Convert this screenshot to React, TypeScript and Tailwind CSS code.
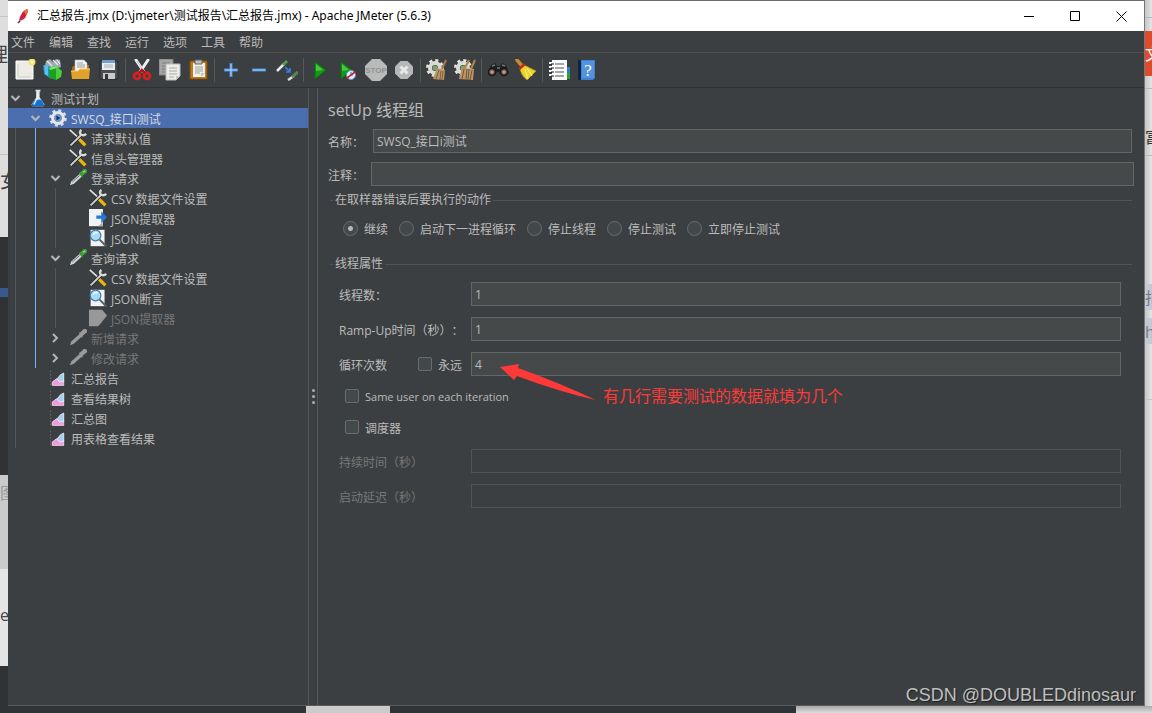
import React from "react";

const Svg = ({ size = 22, children }: { size?: number; children: React.ReactNode }) => (
    <svg width={size} height={size} viewBox="0 0 22 22" fill="none" aria-hidden="true" className="shrink-0">
        {children}
    </svg>
);

/* toolbar icons */

const NewIcon = () => (
    <Svg>
        <path d="M2 2h17v18H2z" fill="#ecebe6" stroke="#fff" />
        <path d="M4 5v12M4 18h13" stroke="#cfcfca" />
        <circle cx="18" cy="3" r="3.5" fill="#f3e36b" />
        <circle cx="18" cy="3" r="1.5" fill="#fffbd0" />
    </Svg>
);

const TemplatesIcon = () => (
    <Svg>
        <path d="M3 7l1-5 4-2 3 3 3-3 4 1 1 7-9 3z" fill="#9fa9b0" />
        <path d="M5 2l5 5M11 1l5 5M15 1l3 4" stroke="#e6ebee" strokeWidth="1.2" />
        <path d="M1 6l8 2v12l-7-5z" fill="#1f8fd0" />
        <path d="M2 6l4 1v10l-3-2z" fill="#57c0f0" />
        <path d="M7 9l7-2v14l-7-2z" fill="#1e9e22" />
        <path d="M14 7l6 5-1 6-5 3z" fill="#48d03a" />
        <path d="M7 9l7-2 1 2-7 2z" fill="#7be86a" />
    </Svg>
);

const OpenIcon = () => (
    <Svg>
        <path d="M2 8l4-2h13v13H2z" fill="#a86f12" />
        <path d="M5 1h9l3 3v9H5z" fill="#f4f4f4" stroke="#bbb" strokeWidth=".6" />
        <path d="M7 4h6M7 6h8M7 8h8" stroke="#999" />
        <path d="M1 12h7l2-2h10l-1 10H2z" fill="#e0a22d" />
        <path d="M1 12h7l2-2h10" stroke="#f7d06f" />
    </Svg>
);

const SaveIcon = () => (
    <Svg>
        <path d="M2 2h17l1 1v17H2z" fill="#4b4d50" stroke="#26282a" />
        <path d="M4 1h13v10H4z" fill="#e9eef3" />
        <path d="M4 1h13v3H4z" fill="#6f9ed0" />
        <path d="M6 6h9M6 8h9" stroke="#a9b0b6" />
        <path d="M5 14h12v6H5z" fill="#c7cacc" />
        <path d="M7 15h3v5H7z" fill="#333" />
    </Svg>
);

const CutIcon = () => (
    <Svg>
        <path d="M5 1l8 12M17 1L9 13" stroke="#eef0f1" strokeWidth="3" strokeLinecap="round" />
        <path d="M6 2l7 11" stroke="#aaa" strokeWidth=".7" />
        <ellipse cx="6" cy="17" rx="3" ry="3" stroke="#d61f1f" strokeWidth="2.8" />
        <ellipse cx="16" cy="17" rx="3" ry="3" stroke="#d61f1f" strokeWidth="2.8" />
        <path d="M8 14l3-3 3 3" stroke="#b81414" strokeWidth="2.5" />
    </Svg>
);

const CopyIcon = () => (
    <Svg>
        <path d="M0 0h14v16H0z" fill="#a5a6a3" stroke="#7e7e7c" />
        <path d="M3 4h8M3 7h5M3 10h5M3 13h5" stroke="#7d7d7a" />
        <path d="M7 5h14v12l-4 4H7z" fill="#edeee9" stroke="#bcbcb8" />
        <path d="M10 9h8M10 12h8M10 15h8M10 18h5" stroke="#a9aaa6" />
        <path d="M17 21v-4h4z" fill="#c8c8c2" />
    </Svg>
);

const PasteIcon = () => (
    <Svg>
        <path d="M3 2h17v18H3z" fill="#bd7b1b" stroke="#7d4b0a" />
        <path d="M6 4h12v14H6z" fill="#f1f1ec" />
        <path d="M8 1h7v4H8z" fill="#bec2c4" stroke="#606468" />
        <path d="M8 8h8M8 10h8M8 12h8M8 14h5" stroke="#9da09e" />
        <path d="M14 18v-4h4z" fill="#c6c6c0" />
    </Svg>
);

const PlusIcon = () => (
    <Svg>
        <path d="M11 4v14M4 11h14" stroke="#4a8ddb" strokeWidth="3" />
        <path d="M11 5v12M5 11h12" stroke="#b4d7fa" />
    </Svg>
);

const MinusIcon = () => (
    <Svg>
        <path d="M4 11h14" stroke="#4a8ddb" strokeWidth="3" />
        <path d="M5 11h12" stroke="#b4d7fa" />
    </Svg>
);

const ToggleIcon = () => (
    <Svg>
        <path d="M1 12l7-7" stroke="#e7eae8" strokeWidth="2.5" />
        <path d="M7 6l4-4" stroke="#58994a" strokeWidth="3" />
        <path d="M9 8l5 5M14 9v4h-4" stroke="#3180e8" strokeWidth="1.7" />
        <path d="M12 21l6-4" stroke="#d9dedb" strokeWidth="2.5" />
        <path d="M16 18l6-5" stroke="#58835a" strokeWidth="3" />
    </Svg>
);

const RunIcon = () => (
    <Svg>
        <path d="M6 3l11 8-11 9z" fill="#129a17" stroke="#0b6f0e" />
        <path d="M7 5l7 6-7 1z" fill="#4cc344" />
    </Svg>
);

const RunNoTimersIcon = () => (
    <Svg>
        <path d="M4 3l11 8-11 9z" fill="#129a17" stroke="#0b6f0e" />
        <path d="M5 5l7 6-7 1z" fill="#4cc344" />
        <circle cx="14" cy="16" r="4.5" fill="#e6edf6" stroke="#6d8fc0" />
        <path d="M10 19l8-6" stroke="#d62020" strokeWidth="1.6" />
        <path d="M14 13v3h2" stroke="#3467a8" />
    </Svg>
);

const StopIcon = () => (
    <Svg>
        <path d="M7 0h8l7 7v8l-7 7H7l-7-7V7z" fill="#b9bbbb" />
        <text x="11" y="14" textAnchor="middle" fontSize="8" fontWeight="700" fontFamily="Liberation Sans, sans-serif" fill="#8f9292">STOP</text>
    </Svg>
);

const ShutdownIcon = () => (
    <Svg>
        <path d="M7.500 2h7l5.500 5.500v7L14.500 20h-7L2 14.500v-7z" fill="#b6b8b8" />
        <path d="M7.500 7.500l7 7M14.500 7.500l-7 7" stroke="#e8e8e8" strokeWidth="3" />
    </Svg>
);

const Gear = () => (
    <>
        <circle cx="9" cy="9" r="7.500" stroke="#e4e4e0" strokeWidth="3" strokeDasharray="3 2.900" />
        <circle cx="9" cy="9" r="5" stroke="#dadbd7" strokeWidth="4" />
        <circle cx="9" cy="9" r="2.500" fill="#7aa365" />
    </>
);

const ClearIcon = () => (
    <Svg>
        <Gear />
        <path d="M20 1l-4 9" stroke="#a97a45" strokeWidth="2" />
        <path d="M11 9l8 2-1 10-11-1z" fill="#b99568" />
        <path d="M13 11l-3 9M15 12l-1 9M17 12l-1 9" stroke="#755534" strokeWidth=".8" />
    </Svg>
);

const ClearAllIcon = () => (
    <Svg>
        <Gear />
        <path d="M15 1l-4 8M21 1l-4 9" stroke="#b38650" strokeWidth="2" />
        <path d="M8 9l12 1-1 11-14-1z" fill="#b99568" />
        <path d="M10 10l-2 10M13 10l-1 11M15 10l-1 11M18 11l-2 10" stroke="#6e4f30" strokeWidth=".9" />
    </Svg>
);

const SearchIcon = () => (
    <Svg>
        <path d="M4 6l4-2 2 3h3l2-3 4 2 3 8-6 3-4-4h-2l-4 4-5-3z" fill="#1f2020" />
        <path d="M5 7l3-1M15 6l3 1M10 9h3" stroke="#777" strokeWidth="1.500" />
        <circle cx="5" cy="13" r="3.500" fill="#80594a" stroke="#161616" strokeWidth="1.500" />
        <circle cx="17" cy="13" r="3.500" fill="#80594a" stroke="#161616" strokeWidth="1.500" />
        <circle cx="5" cy="13" r="1.500" fill="#b8a9a0" />
        <circle cx="17" cy="13" r="1.500" fill="#b8a9a0" />
    </Svg>
);

const SearchResetIcon = () => (
    <Svg>
        <path d="M2 1l6 7" stroke="#c98a32" strokeWidth="3.500" strokeLinecap="round" />
        <path d="M9 6l12 6-9 9C8 18 6 14 5 10z" fill="#ecd32c" stroke="#b89713" strokeWidth=".8" />
        <path d="M10 10l3 10M12 9l5 8" stroke="#fff28a" />
        <path d="M4 10l6-5" stroke="#c52418" strokeWidth="2.500" />
    </Svg>
);

const HelperIcon = () => (
    <Svg>
        <path d="M17 8h5v6h-5z" fill="#2b7ddd" />
        <path d="M17 14h5v6h-5z" fill="#25a32c" />
        <path d="M4 1h15v20H4z" fill="#fafafa" />
        <path d="M7 5h9M7 9h9M7 13h9M7 17h9" stroke="#4e5358" strokeWidth="1.200" />
        <path d="M1 4h5M1 8h5M1 12h5M1 16h5" stroke="#fff" strokeWidth="2" />
        <path d="M3 5h3M3 9h3M3 13h3M3 17h3" stroke="#111" />
    </Svg>
);

const HelpIcon = () => (
    <Svg>
        <path d="M2 1h5v20H2z" fill="#12233b" />
        <path d="M5 1h14v18l-2 2H5z" fill="#3e80d3" />
        <path d="M6 2h12v17H6z" fill="#5493e0" />
        <text x="12" y="17" textAnchor="middle" fontSize="17" fontFamily="Liberation Serif, serif" fill="#fff">?</text>
    </Svg>
);

/* tree icons */

const FlaskIcon = () => (
    <Svg size={18}>
        <path d="M8 1h6v2h-1v7l6 9-1 2H4l-1-2 6-9V3H8z" fill="#d6e4ef" />
        <path d="M7 13h8l4 7-1 1H4l-1-1z" fill="#1673cd" />
        <path d="M10 4v7l-4 8" stroke="#fff" strokeWidth="1.500" />
    </Svg>
);

const GearIcon = () => (
    <Svg size={18}>
        <circle cx="11" cy="11" r="9" stroke="#dcdfe1" strokeWidth="3.500" strokeDasharray="3.600 3.470" />
        <circle cx="11" cy="11" r="6.500" stroke="#e4e6e8" strokeWidth="4" />
        <circle cx="11" cy="11" r="4.500" fill="#6f97c9" />
        <path d="M9 8l5 3-5 3z" fill="#17396b" />
    </Svg>
);

const ToolsIcon = () => (
    <Svg size={18}>
        <path d="M1 1l11 10" stroke="#e4e6e6" strokeWidth="2" />
        <path d="M12 12l8 8" stroke="#e9b60c" strokeWidth="4" />
        <path d="M2 20L15 7" stroke="#14181a" strokeWidth="4" />
        <path d="M2 20L15 7" stroke="#d0d2d2" strokeWidth="2.500" />
        <path d="M15 1c-2 2-2 5 0 6s4 1 6-1" stroke="#d7dada" strokeWidth="3" />
    </Svg>
);

const SamplerIcon = ({ off = false }: { off?: boolean }) => (
    <Svg size={18}>
        <path d="M1 20l2-5L13 6l3 3L6 18z" fill={off ? "#9b9b9b" : "#d3dcd6"} />
        <path d="M12 5l2-1 4-4c2-1 5 1 4 4l-5 4-1 3z" fill={off ? "#9b9b9b" : "#3fa03a"} />
        {!off && <path d="M4 16L13 8" stroke="#4b5550" />}
        {!off && <path d="M17 4l3-2" stroke="#9be08c" strokeWidth="1.500" />}
    </Svg>
);

const ExtractIcon = ({ off = false }: { off?: boolean }) => (
    <Svg size={18}>
        {off ? (
            <path d="M0 1h16l6 7-8 10-3 3H0z" fill="#989898" />
        ) : (
            <>
                <path d="M0 0h17v21H0z" fill="#f0f2f3" />
                <path d="M11 21l6-5v5z" fill="#aeb2b5" />
                <path d="M9 8h6V3l7 7-7 7v-5H9z" fill="#2079d8" />
            </>
        )}
    </Svg>
);

const AssertIcon = () => (
    <Svg size={18}>
        <path d="M2 1h17v20H2z" fill="#f1f2f2" />
        <circle cx="8" cy="8" r="6.500" fill="#a9daf4" stroke="#477da5" strokeWidth="1.500" />
        <path d="M5 7c1-3 4-3 6-2" stroke="#e8f8ff" strokeWidth="2" />
        <path d="M13 13l8 8" stroke="#58616b" strokeWidth="2.500" />
    </Svg>
);

const ReportIcon = () => (
    <Svg size={18}>
        <path d="M2 2v18h17" stroke="#777" strokeDasharray="2 2" />
        <path d="M4 20v-4l5-4 4 3 5-1v6z" fill="#f09ae0" stroke="#fbe0f6" />
        <path d="M10 12l4-5 4-2v10l-5 1z" fill="#a5ceef" stroke="#ebf7ff" />
    </Svg>
);

const Chevron = ({ open }: { open: boolean }) => (
    <svg width="11" height="11" viewBox="0 0 11 11" fill="none" stroke="#b4b6b7" strokeWidth="2" className="shrink-0" aria-hidden="true">
        <path d={open ? "M1.500 3l4 4 4-4" : "M3 1l4 4-4 4"} />
    </svg>
);

const tools = [
    [
        { name: "新建", Icon: NewIcon },
        { name: "模板", Icon: TemplatesIcon },
        { name: "打开", Icon: OpenIcon },
        { name: "保存", Icon: SaveIcon },
    ],
    [
        { name: "剪切", Icon: CutIcon },
        { name: "复制", Icon: CopyIcon },
        { name: "粘贴", Icon: PasteIcon },
    ],
    [
        { name: "展开", Icon: PlusIcon },
        { name: "收起", Icon: MinusIcon },
        { name: "切换", Icon: ToggleIcon },
    ],
    [
        { name: "启动", Icon: RunIcon },
        { name: "不停顿启动", Icon: RunNoTimersIcon },
        { name: "停止", Icon: StopIcon },
        { name: "关闭", Icon: ShutdownIcon },
    ],
    [
        { name: "清除", Icon: ClearIcon },
        { name: "清除全部", Icon: ClearAllIcon },
    ],
    [
        { name: "搜索", Icon: SearchIcon },
        { name: "重置搜索", Icon: SearchResetIcon },
    ],
    [
        { name: "函数助手", Icon: HelperIcon },
        { name: "帮助", Icon: HelpIcon },
    ],
];

type Node = {
    label: string;
    depth: number;
    icon: React.ReactNode;
    open?: boolean;
    selected?: boolean;
    off?: boolean;
};

const nodes: Node[] = [
    { label: "测试计划", depth: 0, icon: <FlaskIcon />, open: true },
    { label: "SWSQ_接口i测试", depth: 1, icon: <GearIcon />, open: true, selected: true },
    { label: "请求默认值", depth: 2, icon: <ToolsIcon /> },
    { label: "信息头管理器", depth: 2, icon: <ToolsIcon /> },
    { label: "登录请求", depth: 2, icon: <SamplerIcon />, open: true },
    { label: "CSV 数据文件设置", depth: 3, icon: <ToolsIcon /> },
    { label: "JSON提取器", depth: 3, icon: <ExtractIcon /> },
    { label: "JSON断言", depth: 3, icon: <AssertIcon /> },
    { label: "查询请求", depth: 2, icon: <SamplerIcon />, open: true },
    { label: "CSV 数据文件设置", depth: 3, icon: <ToolsIcon /> },
    { label: "JSON断言", depth: 3, icon: <AssertIcon /> },
    { label: "JSON提取器", depth: 3, icon: <ExtractIcon off />, off: true },
    { label: "新增请求", depth: 2, icon: <SamplerIcon off />, open: false, off: true },
    { label: "修改请求", depth: 2, icon: <SamplerIcon off />, open: false, off: true },
    { label: "汇总报告", depth: 1, icon: <ReportIcon /> },
    { label: "查看结果树", depth: 1, icon: <ReportIcon /> },
    { label: "汇总图", depth: 1, icon: <ReportIcon /> },
    { label: "用表格查看结果", depth: 1, icon: <ReportIcon /> },
];

const TreeRow = ({ node }: { node: Node }) => (
    <li className={`flex h-5 items-center ${node.selected ? "bg-[#4b6eaf] text-[#d5dae2]" : node.off ? "text-[#777777]" : ""}`}>
        {Array.from({ length: node.depth }, (_, i) => (
            <span key={i} className="flex h-5 w-5 shrink-0 pl-[7px]">
                {!node.selected && <span className={`w-px ${i === 1 ? "bg-[#75b5f5]" : "bg-[#55585a]"}`} />}
            </span>
        ))}
        <span className="flex w-5 shrink-0 pl-0.5">
            {node.open !== undefined && <Chevron open={node.open} />}
        </span>
        <span className="flex w-5 shrink-0 justify-center">{node.icon}</span>
        <span className="pt-[3px] pl-[3px] whitespace-nowrap">{node.label}</span>
    </li>
);

const inputStyle = "h-6 min-w-0 flex-1 border border-[#646666] bg-[#45494a] px-[3px] text-[#bbbbbb] outline-none disabled:border-[#515354] disabled:bg-[#3c3f41]";
const checkStyle = "h-3.5 w-3.5 shrink-0 appearance-none rounded-xs border border-[#6b6d6d] bg-[#43494a]";
const radioStyle = "h-[15px] w-[15px] shrink-0 appearance-none rounded-full border border-[#6b6d6d] bg-[#43494a] checked:bg-[radial-gradient(circle,#b8b8b8_2px,#43494a_3px)]";
const labelStyle = "w-[132px] shrink-0 pt-[3px]";

const actions = ["继续", "启动下一进程循环", "停止线程", "停止测试", "立即停止测试"];

const TitleBar = () => (
    <header className="flex h-[30px] items-center bg-white text-black">
        <svg width="14" height="18" viewBox="0 0 14 18" className="mr-[7px] ml-2 shrink-0" aria-hidden="true">
            <path d="M3 14C4 9 6 4 11 2c2 2 0 5-1 7-1 3-3 4-7 5z" fill="#c92440" />
            <path d="M8 4c1-1 2-2 3-2 2 2 0 4-1 6z" fill="#ed7429" />
            <path d="M4 14l-2 2" stroke="#5b2364" strokeWidth="1.500" />
        </svg>
        <h1 className="flex-1 truncate font-['Noto_Sans','Noto_Sans_CJK_SC',sans-serif]">汇总报告.jmx (D:\jmeter\测试报告\汇总报告.jmx) - Apache JMeter (5.6.3)</h1>
        <button aria-label="最小化" className="flex h-full w-[45px] items-center justify-center">
            <svg width="11" height="11" stroke="#000"><path d="M0 5.500h10" /></svg>
        </button>
        <button aria-label="最大化" className="flex h-full w-[46px] items-center justify-center">
            <svg width="11" height="11" stroke="#000" fill="none"><path d="M.5.5h9v9h-9z" /></svg>
        </button>
        <button aria-label="关闭" className="flex h-full w-[46px] items-center justify-center">
            <svg width="11" height="11" stroke="#000"><path d="M.5.5l10 10M10.500.5l-10 10" /></svg>
        </button>
    </header>
);

const ThreadGroupForm = () => (
    <main className="min-w-0 flex-1 border-l border-[#55585a] px-[10px] pt-3">
        <h2 className="text-base leading-5">setUp 线程组</h2>
        <div className="mt-[9px] mr-0.5 flex items-center">
            <label htmlFor="name" className="w-[45px] shrink-0 pt-[3px]">名称：</label>
            <input id="name" defaultValue="SWSQ_接口i测试" className={inputStyle} />
        </div>
        <div className="mt-[9px] flex items-center">
            <label htmlFor="comment" className="w-[43px] shrink-0 pt-[3px]">注释：</label>
            <input id="comment" className={inputStyle} />
        </div>

        <fieldset className="mx-0.5 mt-1 border-t border-[#515456]">
            <legend className="ml-[3px] px-0.5">在取样器错误后要执行的动作</legend>
            <div className="mt-2 flex flex-wrap gap-x-[11px] pl-[13px]">
                {actions.map((action, i) => (
                    <label key={action} className="flex h-5 items-center gap-1.5">
                        <input type="radio" name="action" defaultChecked={i === 0} className={radioStyle} />
                        <span className="pt-[3px]">{action}</span>
                    </label>
                ))}
            </div>
        </fieldset>

        <fieldset className="mx-0.5 mt-4 border-t border-[#515456]">
            <legend className="ml-[3px] px-0.5">线程属性</legend>
            <div className="flex flex-col pt-2 pr-[11px] pl-[9px]">
                <div className="flex items-center">
                    <label htmlFor="threads" className={labelStyle}>线程数：</label>
                    <input id="threads" defaultValue="1" className={inputStyle} />
                </div>
                <div className="mt-[11px] flex items-center">
                    <label htmlFor="ramp" className={labelStyle}>Ramp-Up时间（秒）：</label>
                    <input id="ramp" defaultValue="1" className={inputStyle} />
                </div>
                <div className="relative mt-[11px] flex items-center">
                    <label htmlFor="loops" className="w-[79px] shrink-0 pt-[3px]">循环次数</label>
                    <label className="flex w-[53px] shrink-0 items-center gap-1.5">
                        <input type="checkbox" className={checkStyle} />
                        <span className="pt-[3px]">永远</span>
                    </label>
                    <input id="loops" defaultValue="4" className={inputStyle} />
                    {/* note pinned on the loop count */}
                    <svg width="98" height="40" viewBox="0 0 98 40" className="absolute top-[11px] left-[161px]" aria-hidden="true">
                        <path d="M0 4L19 1l-1 4Q55 18 96 37 60 29 17 13l-3 4z" fill="#fe3a39" />
                    </svg>
                    <p className="absolute top-[34px] left-[264px] text-base leading-5 whitespace-nowrap text-[#fe3a39]">有几行需要测试的数据就填为几个</p>
                </div>
                <label className="mt-[10px] flex h-5 items-center gap-1.5 self-start pl-1.5">
                    <input type="checkbox" className={checkStyle} />
                    <span className="pt-0.5 text-[11px]">Same user on each iteration</span>
                </label>
                <label className="mt-[11px] flex h-5 items-center gap-1.5 self-start pl-1.5">
                    <input type="checkbox" className={checkStyle} />
                    <span className="pt-[3px]">调度器</span>
                </label>
                <div className="mt-3 flex items-center text-[#777777]">
                    <label htmlFor="duration" className={labelStyle}>持续时间（秒）</label>
                    <input id="duration" disabled className={inputStyle} />
                </div>
                <div className="mt-[11px] flex items-center text-[#777777]">
                    <label htmlFor="delay" className={labelStyle}>启动延迟（秒）</label>
                    <input id="delay" disabled className={inputStyle} />
                </div>
            </div>
        </fieldset>
    </main>
);

/* slivers of the windows behind */

const LeftEdge = () => (
    <div className="flex w-2 shrink-0 flex-col overflow-hidden bg-[#dedede] text-base leading-5 text-[#444444]" aria-hidden="true">
        <div className="h-[17px] border-b border-[#c4c4c4]" />
        <div className="flex h-[138px] justify-end border-b border-[#c4c4c4] pt-6 text-xl">理</div>
        <div className="flex h-[82px] justify-start pt-3 text-xl">女</div>
        <div className="h-[51px] bg-[#303234]" />
        <div className="h-[9px] bg-[#38588f]" />
        <div className="h-[178px] bg-[#303234]" />
        <div className="h-[94px] bg-[#cbcbcb] pt-2 text-[#999999]">图</div>
        <div className="h-[97px] bg-[#e4e4e4] pt-9">e</div>
        <div className="flex-1 bg-[#303336]" />
    </div>
);

const RightEdge = () => (
    <div className="flex w-[7px] shrink-0 flex-col overflow-hidden bg-linear-to-r from-[#c6c6c6] to-[#e6e6e6] text-base leading-5" aria-hidden="true">
        <div className="h-[18px] border-b border-[#b9b9b9]" />
        <div className="h-[13px]" />
        <div className="flex h-[45px] items-center bg-[#de4b2d] text-white">文</div>
        <div className="h-[13px] border-b border-[#b9b9b9]" />
        <div className="flex h-[67px] items-end border-b border-[#b9b9b9] pb-2 text-[#333333]">富</div>
        <div className="h-[128px]" />
        <div className="h-[26px] bg-[#c5c9d3] pt-1 text-[#73778f]">指</div>
        <div className="mt-2 h-[26px] bg-[#c5c9d3] pt-1 text-[#73778f]">h</div>
        <div className="h-[56px] border-b border-[#c4c4c4]" />
    </div>
);

const App = () => (
    <div className="relative flex min-h-screen flex-col font-['Open_Sans','Noto_Sans_CJK_SC',sans-serif] text-xs leading-5 text-[#bbbbbb] [text-spacing-trim:space-all]">
        <div className="flex flex-1">
            <LeftEdge />
            <div className="flex min-w-0 flex-1 flex-col border-t border-r border-b border-t-[#6c6c6e] border-r-[#777777] border-b-[#5a5a5a] bg-[#3c3f41]">
                <TitleBar />
                <nav className="flex h-[22px] items-center gap-[14px] border-b border-[#515151] pt-0.5 pl-[3px]">
                    {["文件", "编辑", "查找", "运行", "选项", "工具", "帮助"].map((menu) => (
                        <button key={menu}>{menu}</button>
                    ))}
                </nav>
                <div className="flex h-[35px] items-center border-b border-[#323232] pl-[3px]">
                    {tools.map((group, i) => (
                        <React.Fragment key={i}>
                            {i > 0 && <span className="mx-0.5 h-6 w-px bg-[#55585a]" />}
                            {group.map(({ name, Icon }) => (
                                <button key={name} aria-label={name} className="flex h-7 w-7 items-center justify-center">
                                    <Icon />
                                </button>
                            ))}
                        </React.Fragment>
                    ))}
                </div>
                <div className="flex flex-1">
                    <ul className="w-[300px] shrink-0">
                        {nodes.map((node, i) => <TreeRow key={i} node={node} />)}
                    </ul>
                    <div className="flex w-[9px] shrink-0 flex-col items-center justify-center gap-[3px] border-l border-[#55585a]">
                        <span className="h-[3px] w-[3px] rounded-full bg-[#adadad]" />
                        <span className="h-[3px] w-[3px] rounded-full bg-[#adadad]" />
                        <span className="h-[3px] w-[3px] rounded-full bg-[#adadad]" />
                    </div>
                    <ThreadGroupForm />
                </div>
            </div>
            <RightEdge />
        </div>
        <div className="flex h-[7px] shrink-0 overflow-hidden bg-[#303335]" aria-hidden="true">
            <div className="w-[306px]" />
            <div className="w-[84px] bg-[#cccccc]" />
            <div className="w-[406px]" />
            <div className="flex-1 bg-linear-to-b from-[#a8a8a8] to-[#dddddd]" />
        </div>
        <p className="absolute right-4 bottom-1 font-['Liberation_Sans',sans-serif] text-lg leading-7 text-[#bfc0c0] [text-shadow:1px_1px_1px_#1e1e1e]">CSDN @DOUBLEDdinosaur</p>
    </div>
);

export default App;
